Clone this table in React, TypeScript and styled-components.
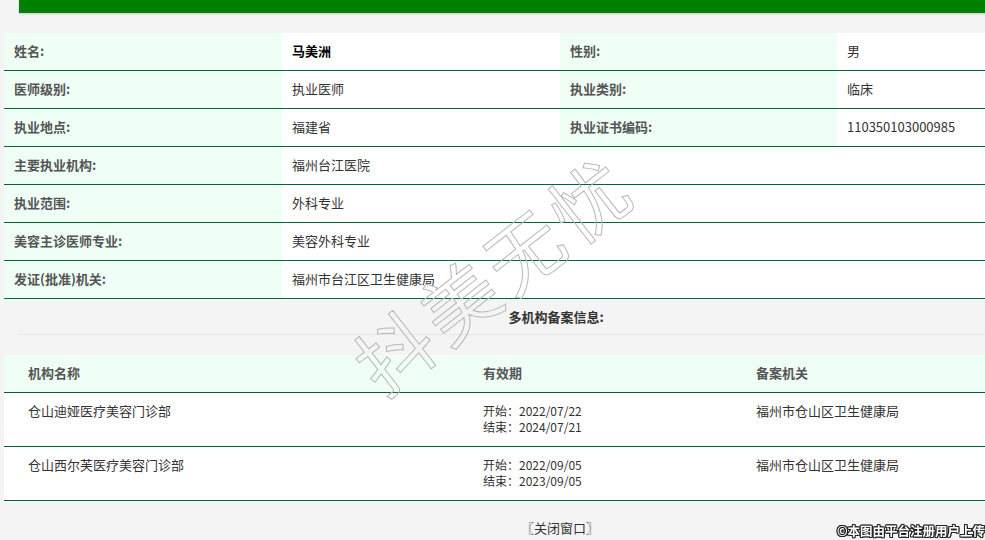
import React from "react";
import styled, { createGlobalStyle } from "styled-components";

const GlobalStyle = createGlobalStyle`
  html, body {
    margin: 0;
    padding: 0;
    background: #f4f4f4;
    overflow: hidden;
  }
  body {
    font-family: "Noto Sans CJK SC", "Microsoft YaHei", sans-serif;
    font-size: 13px;
    color: #333;
  }
`;

const Page = styled.div`
  position: relative;
  width: 1112px;
  padding-left: 4px;
  height: 540px;
`;

const HeaderBar = styled.div`
  margin-left: 15px;
  height: 13px;
  background: #008000;
  overflow: hidden;
  box-shadow: 0 1px 2px rgba(0, 0, 0, 0.18);
`;

const HeaderTitle = styled.div`
  margin-top: -21px;
  padding-left: 56px;
  font-size: 18px;
  line-height: 22px;
  font-weight: bold;
  color: #fff;
  letter-spacing: 4px;
`;

const InfoTable = styled.div`
  margin-top: 20px;
  width: 1112px;
  background: #fff;
`;

const InfoRow = styled.div`
  display: grid;
  grid-template-columns: 278px 278px 277px 1fr;
  height: 37px;
  border-bottom: 1px solid #006633;
`;

const LabelCell = styled.div`
  display: flex;
  align-items: center;
  padding: 0 0 2px 10px;
  background: #effff5;
  font-weight: bold;
  color: #555;
`;

const ValueCell = styled.div<{ $wide?: boolean; $strong?: boolean }>`
  display: flex;
  align-items: center;
  padding: 0 0 2px 10px;
  background: #fff;
  color: ${(p) => (p.$strong ? "#000" : "#333")};
  font-weight: ${(p) => (p.$strong ? "bold" : "normal")};
  grid-column: ${(p) => (p.$wide ? "2 / -1" : "auto")};
`;

const SectionTitle = styled.div`
  margin-left: 14px;
  width: 1076px;
  height: 36px;
  border-bottom: 1px solid #e6e6e6;
  display: flex;
  align-items: center;
  justify-content: center;
  padding-bottom: 1px;
  box-sizing: border-box;
  font-weight: bold;
  color: #333;
`;

const RecordTable = styled.div`
  margin-top: 20px;
  width: 1112px;
`;

const RecordHead = styled.div`
  display: grid;
  grid-template-columns: 455px 273px 1fr;
  height: 37px;
  background: #effff5;
  border-bottom: 1px solid #006633;
  font-weight: bold;
  color: #555;
`;

const HeadCell = styled.div`
  display: flex;
  align-items: center;
  padding: 0 0 2px 24px;
`;

const RecordRow = styled.div`
  display: grid;
  grid-template-columns: 455px 273px 1fr;
  height: 53px;
  background: #fff;
  border-bottom: 1px solid #006633;
`;

const BodyCell = styled.div<{ $small?: boolean }>`
  padding: 10px 0 0 24px;
  line-height: 16px;
  font-size: ${(p) => (p.$small ? "12px" : "13px")};
  color: #333;
`;

const CloseLink = styled.div`
  margin-top: 19px;
  text-align: center;
  line-height: 16px;
  color: #333;
  cursor: pointer;
`;

const Watermark = styled.div`
  position: absolute;
  left: 492px;
  top: 272px;
  transform: translate(-50%, -50%) rotate(-38deg);
  font-size: 76px;
  letter-spacing: 6px;
  white-space: nowrap;
  color: transparent;
  -webkit-text-stroke: 1px #b8b8b8;
  pointer-events: none;
`;

const Copyright = styled.div`
  position: fixed;
  right: 0;
  bottom: 1px;
  font-size: 12.5px;
  line-height: 16px;
  font-weight: bold;
  color: #fff;
  text-shadow: 1px 0 0 #222, -1px 0 0 #222, 0 1px 0 #222, 0 -1px 0 #222,
    1px 1px 0 #222, -1px -1px 0 #222, 1px -1px 0 #222, -1px 1px 0 #222;
`;

const records = [
  {
    name: "仓山迪娅医疗美容门诊部",
    start: "2022/07/22",
    end: "2024/07/21",
    agency: "福州市仓山区卫生健康局",
  },
  {
    name: "仓山西尔芙医疗美容门诊部",
    start: "2022/09/05",
    end: "2023/09/05",
    agency: "福州市仓山区卫生健康局",
  },
];

export default function App() {
  return (
    <>
      <GlobalStyle />
      <Page>
        <HeaderBar>
          <HeaderTitle>执业医师 信息查询</HeaderTitle>
        </HeaderBar>

        <InfoTable>
          <InfoRow>
            <LabelCell>姓名:</LabelCell>
            <ValueCell $strong>马美洲</ValueCell>
            <LabelCell>性别:</LabelCell>
            <ValueCell>男</ValueCell>
          </InfoRow>
          <InfoRow>
            <LabelCell>医师级别:</LabelCell>
            <ValueCell>执业医师</ValueCell>
            <LabelCell>执业类别:</LabelCell>
            <ValueCell>临床</ValueCell>
          </InfoRow>
          <InfoRow>
            <LabelCell>执业地点:</LabelCell>
            <ValueCell>福建省</ValueCell>
            <LabelCell>执业证书编码:</LabelCell>
            <ValueCell>110350103000985</ValueCell>
          </InfoRow>
          <InfoRow>
            <LabelCell>主要执业机构:</LabelCell>
            <ValueCell $wide>福州台江医院</ValueCell>
          </InfoRow>
          <InfoRow>
            <LabelCell>执业范围:</LabelCell>
            <ValueCell $wide>外科专业</ValueCell>
          </InfoRow>
          <InfoRow>
            <LabelCell>美容主诊医师专业:</LabelCell>
            <ValueCell $wide>美容外科专业</ValueCell>
          </InfoRow>
          <InfoRow>
            <LabelCell>发证(批准)机关:</LabelCell>
            <ValueCell $wide>福州市台江区卫生健康局</ValueCell>
          </InfoRow>
        </InfoTable>

        <SectionTitle>多机构备案信息:</SectionTitle>

        <RecordTable>
          <RecordHead>
            <HeadCell>机构名称</HeadCell>
            <HeadCell>有效期</HeadCell>
            <HeadCell>备案机关</HeadCell>
          </RecordHead>
          {records.map((r) => (
            <RecordRow key={r.name}>
              <BodyCell>{r.name}</BodyCell>
              <BodyCell $small>
                开始：{r.start}
                <br />
                结束：{r.end}
              </BodyCell>
              <BodyCell>{r.agency}</BodyCell>
            </RecordRow>
          ))}
        </RecordTable>

        <CloseLink>〖关闭窗口〗</CloseLink>

        <Watermark>抖美无忧</Watermark>
      </Page>
      <Copyright>©本图由平台注册用户上传</Copyright>
    </>
  );
}
